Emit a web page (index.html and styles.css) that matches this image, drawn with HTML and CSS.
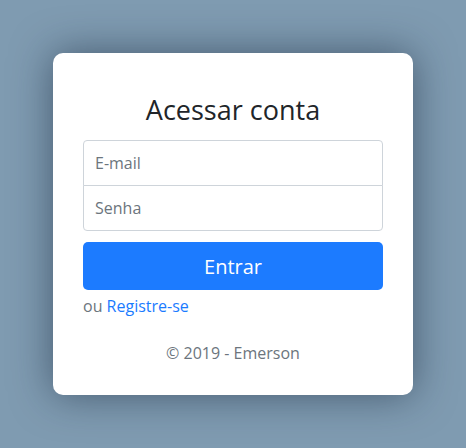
FILE: index.html
```html
<!DOCTYPE html>
<html lang="pt-BR">
<head>
<meta charset="utf-8">
<title>Acessar conta</title>
<link rel="stylesheet" href="styles.css">
</head>
<body>
<main class="page">
  <form class="card">
    <h1 class="title">Acessar conta</h1>
    <div class="fields">
      <input class="field field-top" type="email" placeholder="E-mail">
      <input class="field field-bottom" type="password" placeholder="Senha">
    </div>
    <button class="btn" type="submit">Entrar</button>
    <p class="alt">ou <a href="#" class="link">Registre-se</a></p>
    <p class="copy">© 2019 - Emerson</p>
  </form>
</main>
</body>
</html>
```
FILE: styles.css
```css
* { box-sizing: border-box; }
html, body { margin: 0; height: 100%; }
body {
  background: #7f9bb1;
  font-family: "Open Sans", "Noto Sans", sans-serif;
  color: #212529;
}
.page {
  height: 100%;
  padding-top: 53px;
  display: flex;
  justify-content: center;
  align-items: flex-start;
}
.card {
  width: 360px;
  background: #fff;
  border-radius: 10px;
  padding: 40px 30px 30px;
  box-shadow: 0 0 40px rgba(20, 35, 55, 0.55);
  display: flex;
  flex-direction: column;
}
.title {
  margin: 0 0 13px;
  font-size: 27px;
  font-weight: 400;
  line-height: 34px;
  text-align: center;
}
.fields { display: flex; flex-direction: column; }
.field {
  height: 46px;
  padding: 10px 11px;
  font: inherit;
  font-size: 16px;
  color: #495057;
  border: 1px solid #ced4da;
  background: #fff;
}
.field::placeholder { color: #6c757d; }
.field-top { border-radius: 4px 4px 0 0; margin-bottom: -1px; }
.field-bottom { border-radius: 0 0 4px 4px; }
.btn {
  margin-top: 11px;
  height: 48px;
  border: 0;
  border-radius: 5px;
  background: #1c7bff;
  color: #fff;
  font: inherit;
  font-size: 20px;
}
.alt {
  margin: 4px 0 0;
  font-size: 16px;
  line-height: 24px;
  color: #6c757d;
}
.link { color: #1a7bff; text-decoration: none; }
.copy {
  margin: 23px 0 0;
  font-size: 16px;
  line-height: 24px;
  text-align: center;
  color: #6c757d;
}
```
